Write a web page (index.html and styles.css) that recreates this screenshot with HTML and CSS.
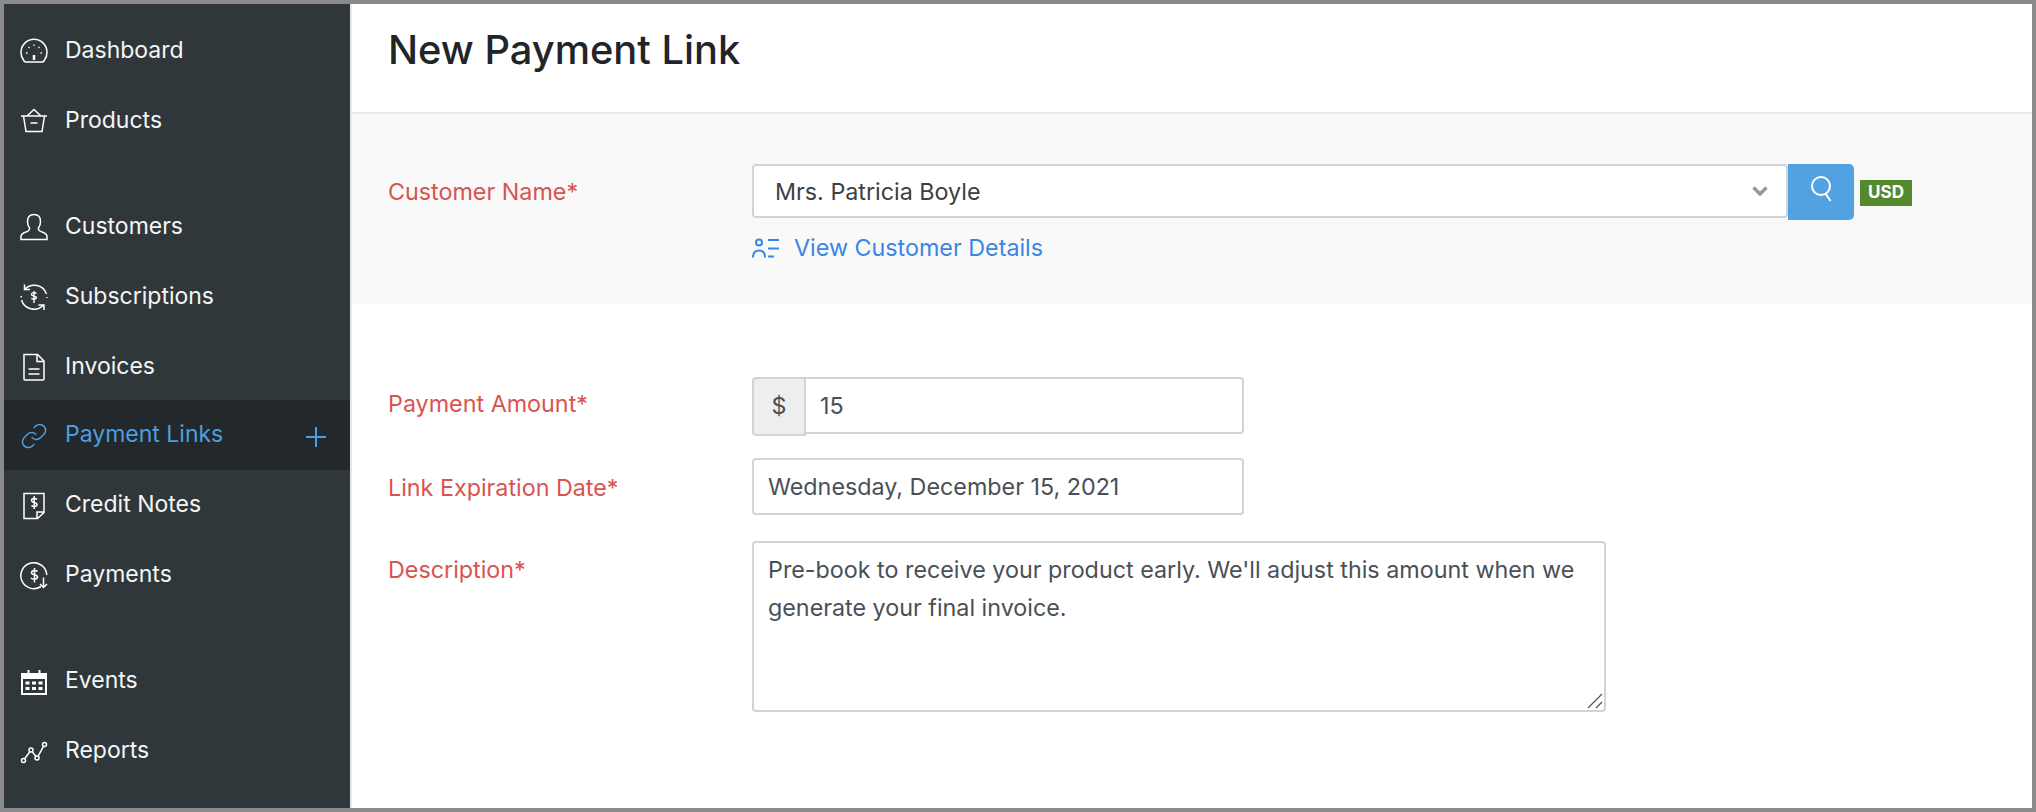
FILE: index.html
```html
<!DOCTYPE html>
<html lang="en">
<head>
<meta charset="utf-8">
<title>New Payment Link</title>
<link rel="stylesheet" href="styles.css">
</head>
<body>
<div class="frame">
  <nav class="sidebar">
    <ul class="nav-group">
      <li class="nav-item"><svg class="nav-icon" viewBox="0 0 28 28"><path d="M6 25h16q2 0 2.500-2A13 13 0 1 0 3.500 23q.5 2 2.500 2z"/><path d="M14 18v5" stroke-width="2.500"/><path d="M14 7.500v1.500M8.500 10l1 1M19.500 10l-1 1M6 16h1.500M20.500 16H22" stroke-width="1.300"/></svg><span>Dashboard</span></li>
      <li class="nav-item"><svg class="nav-icon" viewBox="0 0 28 28"><path d="M1 9h26M3.500 9l2.500 15.500h16L24.500 9M7 9l7-6.500L21 9M10.500 16h7"/></svg><span>Products</span></li>
    </ul>
    <ul class="nav-group">
      <li class="nav-item"><svg class="nav-icon" viewBox="0 0 28 28"><path d="M1 26.500v-3c0-2.500 2-3.500 5-4.500 3-1 4-2 3.500-4C8 13 7.500 11 7.500 8.500 7.500 4 10 1.500 14 1.500S20.500 4 20.500 8.500c0 2.500-.5 4.500-2 6.500-.5 2 .5 3 3.500 4s5 2 5 4.500v3z"/></svg><span>Customers</span></li>
      <li class="nav-item"><svg class="nav-icon" viewBox="0 0 28 28"><path d="M5 6A13 13 0 0 1 26.500 11M4.500 1.500V6.500h5.500M23 22.500A13 13 0 0 1 1.500 17M24 27v-5h-5.500M1.200 13v1.500M26.800 14v1"/><path d="M16.500 10.500c-1-1.300-5-1.300-5 .9s5 1.200 5 3.200-4 2-5.200.7M14 8v12" stroke-width="1.400"/></svg><span>Subscriptions</span></li>
      <li class="nav-item"><svg class="nav-icon" viewBox="0 0 28 28"><path d="M4 1.500h13.500L24 8v18a1 1 0 0 1-1 1H5a1 1 0 0 1-1-1zM17 1.500V8.500h7M8.500 16h11M8.500 21h11"/></svg><span>Invoices</span></li>
      <li class="nav-item active"><svg class="nav-icon link-icon" viewBox="0 0 24 24"><path d="M10 13a5 5 0 0 0 7.540.54l3-3a5 5 0 0 0-7.070-7.070l-1.720 1.710"/><path d="M14 11a5 5 0 0 0-7.540-.54l-3 3a5 5 0 0 0 7.070 7.070l1.710-1.710"/></svg><span>Payment Links</span><svg class="nav-plus" viewBox="0 0 20 20"><path d="M10 0v20M0 10h20"/></svg></li>
      <li class="nav-item shifted"><svg class="nav-icon" viewBox="0 0 28 28"><path d="M4 1.500h20v19l-6.500 6H4zM24 20h-7v6.500"/><path d="M17 7.500c-1-1.500-5.500-1.500-5.500 1s5.500 1.500 5.500 4-4.500 2.500-5.500 1M14.200 4v13" stroke-width="1.500"/></svg><span>Credit Notes</span></li>
      <li class="nav-item shifted"><svg class="nav-icon" viewBox="0 0 28 28"><path d="M21 24.500A13 13 0 1 1 26.800 13"/><path d="M17.500 9.500c-1-1.500-6-1.500-6 1.200s6 1.500 6 4.300-5 2.500-6.500 1M14.500 6v14.500M23.500 15.500v10M20 22l3.500 3.500L27 22" stroke-width="1.500"/></svg><span>Payments</span></li>
    </ul>
    <ul class="nav-group">
      <li class="nav-item shifted"><svg class="nav-icon" viewBox="0 0 28 28"><path d="M2 6h24v20H2z" stroke-width="2"/><path class="fill" d="M1 5h5.500v2h4V5h7v2h4V5H27v6H1zM5.500 13.500h4v3h-4zM12 13.500h4v3h-4zM18.500 13.500h4v3h-4zM5.500 19h4v3h-4zM12 19h4v3h-4zM18.500 19h4v3h-4z"/><path d="M8.500 2v4M19.500 2v4" stroke-width="2"/></svg><span>Events</span></li>
      <li class="nav-item shifted"><svg class="nav-icon" viewBox="0 0 28 28"><circle cx="3.500" cy="22.500" r="2"/><circle cx="11" cy="12" r="2"/><circle cx="17" cy="20" r="2"/><circle cx="24.500" cy="6.500" r="2"/><path d="M4.700 20.800 9.800 13.800M12.200 13.800l3.600 4.500M18 18.300 23.500 8.300"/></svg><span>Reports</span></li>
    </ul>
  </nav>
  <main class="content">
    <header class="page-header"><h1 class="page-title">New Payment Link</h1></header>
    <section class="customer-band">
      <div class="form-row">
        <label class="field-label">Customer Name*</label>
        <div>
          <div class="customer-picker">
            <div class="select-box"><span class="select-value">Mrs. Patricia Boyle</span><svg class="chevron" viewBox="0 0 16 10"><path d="M1.500 1.500 8 8l6.500-6.500"/></svg></div>
            <button class="search-button" type="button" aria-label="Search"><svg class="search-icon" viewBox="0 0 24 26"><circle cx="12" cy="10" r="9"/><path d="m16.500 17.500 5 7.500"/></svg></button>
            <span class="currency-badge">USD</span>
          </div>
          <a class="details-link"><svg class="details-icon" viewBox="0 0 28 20"><circle cx="7" cy="4.500" r="3"/><path d="M1 19.500c0-4.500 2.500-7 6-7s6 2.500 6 7M16 2h11M16 10.500h11M16 18.500h6"/></svg>View Customer Details</a>
        </div>
      </div>
    </section>
    <form class="details-form">
      <div class="form-row amount-row">
        <label class="field-label">Payment Amount*</label>
        <div class="amount-group"><span class="addon">$</span><input class="text-input amount-input" value="15" readonly></div>
      </div>
      <div class="form-row date-row">
        <label class="field-label">Link Expiration Date*</label>
        <input class="text-input date-input" value="Wednesday, December 15, 2021" readonly>
      </div>
      <div class="form-row desc-row">
        <label class="field-label">Description*</label>
        <div class="area-wrap">
          <textarea class="text-area" readonly>Pre-book to receive your product early. We'll adjust this amount when we generate your final invoice.</textarea>
          <svg class="grip" viewBox="0 0 16 16"><path d="M1 15 15 1M9 15l6-6"/></svg>
        </div>
      </div>
    </form>
  </main>
</div>
</body>
</html>
```
FILE: styles.css
```css
* { box-sizing: border-box; }
html, body { margin: 0; padding: 0; }
body { font-family: Inter, "Liberation Sans", sans-serif; font-size: 23.3px; background: #fff; }
.frame { width: 2036px; height: 812px; border: 4px solid #8a8a8a; display: flex; overflow: hidden; background: #fff; }
.sidebar { width: 348px; flex: none; background: #30373b; border-right: 2px solid #e6e6e6; padding-top: 10px; color: #fff; }
.nav-group { list-style: none; margin: 0 0 36px; padding: 0; }
.nav-item { height: 70px; display: flex; align-items: center; padding-left: 16px; font-size: 23px; color: #f4f5f5; }
.nav-item span { margin-left: 18px; position: relative; top: 1px; left: -1px; }
.nav-item.active span, .nav-item.shifted span { top: -1px; }
.nav-icon { width: 28px; height: 28px; flex: none; margin-top: 4px; fill: none; stroke: #fff; stroke-width: 1.500; }
.nav-item.shifted .nav-icon, .nav-item.active .nav-icon { margin-top: 2px; }
.nav-icon .fill { fill: #fff; stroke: none; fill-rule: evenodd; }
.nav-item.active { background: #22282b; color: #4d9fdf; }
.nav-item.active .nav-icon { stroke: #4d9fdf; stroke-width: 1.300; }
.nav-plus { width: 20px; height: 20px; margin-left: auto; margin-right: 24px; margin-top: 4px; fill: none; stroke: #4d9fdf; stroke-width: 2; }
.content { flex: 1; min-width: 0; }
.page-header { height: 110px; padding-left: 36px; display: flex; align-items: center; border-bottom: 2px solid #ececec; }
.page-title { margin: 0; font-size: 39.800px; font-weight: 500; color: #212529; position: relative; top: -9px; }
.customer-band { height: 190px; background: #f9f9f9; padding: 50px 0 0 36px; }
.form-row { display: grid; grid-template-columns: 364px auto; justify-content: start; }
.field-label { color: #d9534f; line-height: 28px; padding-top: 14px; }
.customer-picker { display: flex; align-items: flex-start; }
.select-box { width: 1036px; height: 54px; background: #fff; border: 2px solid #ced4da; border-radius: 4px; display: flex; align-items: center; justify-content: space-between; padding: 0 18px 0 21px; }
.select-value { color: #3c3f43; }
.chevron { width: 16px; height: 10px; fill: none; stroke: #9a9a9a; stroke-width: 3.500; }
.search-button { width: 66px; height: 56px; border: 0; padding: 12px 0 0; background: #52a2e2; border-radius: 0 5px 5px 0; display: flex; justify-content: center; }
.search-icon { width: 24px; height: 26px; fill: none; stroke: #fff; stroke-width: 2; }
.currency-badge { margin: 16px 0 0 6px; width: 52px; height: 26px; background: #548a2c; color: #fff; font-size: 17px; font-weight: 700; line-height: 25px; text-align: center; }
.details-link { display: flex; align-items: center; margin-top: 14px; color: #3b86e4; line-height: 28px; }
.details-icon { width: 28px; height: 20px; margin-right: 14px; fill: none; stroke: #3b86e4; stroke-width: 2; }
.details-form { padding: 73px 0 0 36px; }
.amount-row { height: 81px; }
.date-row { height: 83px; }
.amount-row .field-label { padding-top: 13px; }
.date-row .field-label { padding-top: 16px; }
.desc-row .field-label { padding-top: 15px; }
.amount-group { display: flex; align-items: flex-start; width: 492px; }
.addon { width: 54px; height: 59px; flex: none; background: #eeeeee; border: 2px solid #ced4da; border-radius: 4px 0 0 4px; color: #495057; display: flex; align-items: center; justify-content: center; padding-bottom: 3px; }
.text-input { height: 57px; border: 2px solid #ced4da; border-radius: 4px; background: #fff; color: #495057; font: 23.3px Inter, "Liberation Sans", sans-serif; padding: 0 14px; outline: none; display: block; }
.amount-input { flex: 1; min-width: 0; border-left: 0; border-radius: 0 4px 4px 0; }
.date-input { width: 492px; }
.area-wrap { position: relative; width: 854px; height: 171px; }
.text-area { display: block; width: 100%; height: 100%; border: 2px solid #ced4da; border-radius: 4px; background: #fff; color: #495057; font: 23.3px/38px Inter, "Liberation Sans", sans-serif; padding: 8px 14px; outline: none; resize: none; }
.grip { position: absolute; right: 3px; bottom: 3px; width: 16px; height: 16px; fill: none; stroke: #555; stroke-width: 1.300; }
```
